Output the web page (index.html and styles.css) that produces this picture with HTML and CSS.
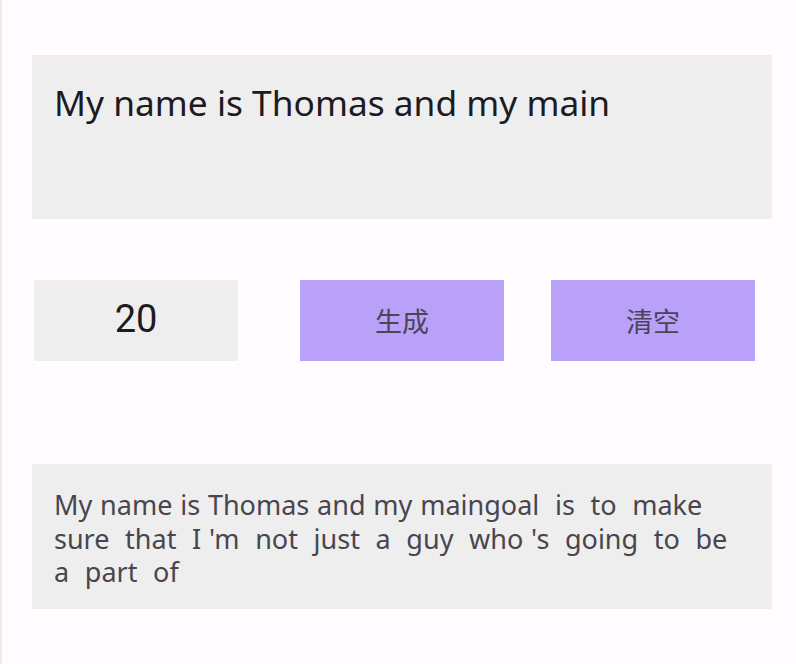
FILE: index.html
```html
<!DOCTYPE html>
<html>
<head>
<meta charset="utf-8">
<link rel="stylesheet" href="styles.css">
</head>
<body>
<div class="page">
  <div class="input-box">My name is Thomas and my main</div>
  <div class="controls">
    <div class="count">20</div>
    <div class="btn btn-gen">生成</div>
    <div class="btn btn-clear">清空</div>
  </div>
  <div class="output-box">My name is Thomas and my maingoal&nbsp; is&nbsp; to&nbsp; make<br>sure&nbsp; that&nbsp; I 'm&nbsp; not&nbsp; just&nbsp; a&nbsp; guy&nbsp; who 's&nbsp; going&nbsp; to&nbsp; be<br>a&nbsp; part&nbsp; of</div>
</div>
</body>
</html>
```
FILE: styles.css
```css
html, body {
  margin: 0;
  padding: 0;
  background: #fffbfe;
}
body {
  width: 796px;
  height: 664px;
  overflow: hidden;
  border-left: 2px solid #ececec;
  box-sizing: border-box;
}
.page {
  padding: 55px 24px 0 30px;
  display: flex;
  flex-direction: column;
}
.input-box {
  background: #eeeeee;
  height: 164px;
  box-sizing: border-box;
  padding: 22px 22px 0 22px;
  font-family: "Noto Sans", sans-serif;
  font-size: 35.3px;
  line-height: 50px;
  color: #1c1b1f;
}
.controls {
  margin-top: 61px;
  display: flex;
  align-items: stretch;
  height: 81px;
}
.count {
  margin-left: 2px;
  width: 204px;
  background: #eeeeee;
  display: flex;
  align-items: center;
  justify-content: center;
  font-family: Roboto, sans-serif;
  font-size: 38px;
  color: #1c1b1f;
  padding-bottom: 4px;
  box-sizing: border-box;
}
.btn {
  width: 204px;
  background: #b9a0f9;
  display: flex;
  align-items: center;
  justify-content: center;
  font-family: "Noto Sans CJK SC", sans-serif;
  font-size: 27px;
  color: #4a4458;
}
.btn-gen { margin-left: 62px; }
.btn-clear { margin-left: 47px; }
.output-box {
  margin-top: 103px;
  background: #eeeeee;
  height: 145px;
  box-sizing: border-box;
  padding: 24px 22px 0 22px;
  font-family: "Noto Sans", sans-serif;
  font-size: 27px;
  line-height: 33.5px;
  word-spacing: 0.8px;
  color: #49454f;
}
```
